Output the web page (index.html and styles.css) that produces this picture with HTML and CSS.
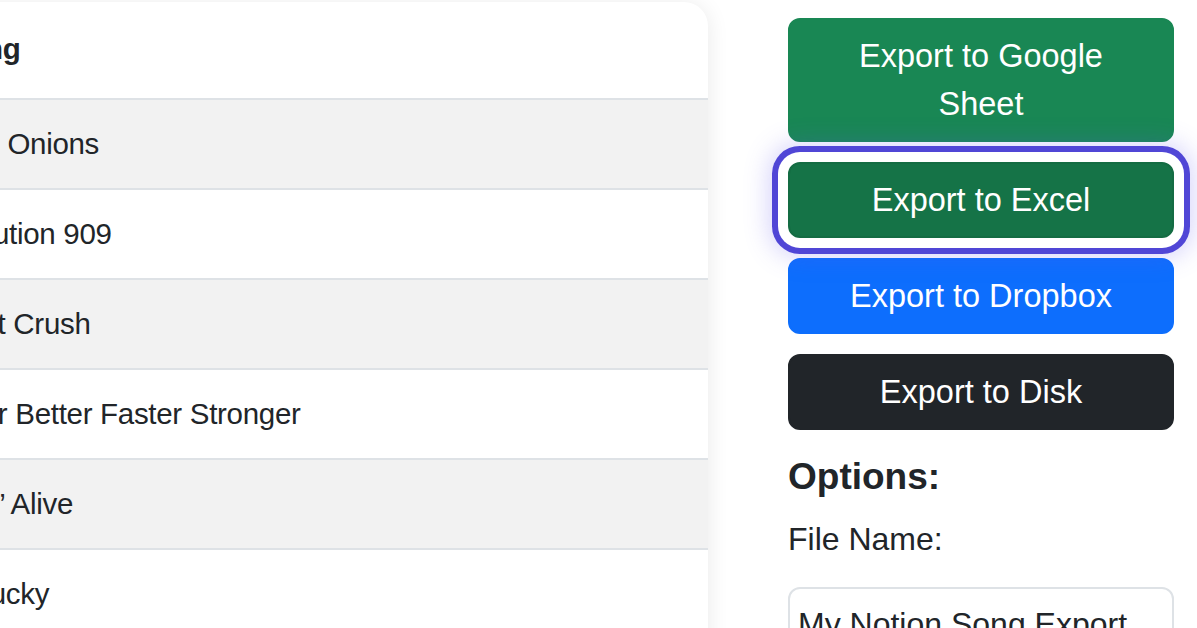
FILE: index.html
```html
<!DOCTYPE html>
<html lang="en">
<head>
<meta charset="utf-8">
<title>Notion Song Export</title>
<link rel="stylesheet" href="styles.css">
</head>
<body>
<div class="layout">
  <div class="card">
    <table class="songs">
      <thead>
        <tr><th>Song</th></tr>
      </thead>
      <tbody>
        <tr><td>Green Onions</td></tr>
        <tr><td>Revolution 909</td></tr>
        <tr><td>Instant Crush</td></tr>
        <tr><td>Harder Better Faster Stronger</td></tr>
        <tr><td>Stayin’ Alive</td></tr>
        <tr><td>Get Lucky</td></tr>
        <tr><td>One More Time</td></tr>
      </tbody>
    </table>
  </div>
  <aside class="panel">
    <div class="actions">
      <button class="btn btn-google">Export to Google Sheet</button>
      <button class="btn btn-excel">Export to Excel</button>
      <button class="btn btn-dropbox">Export to Dropbox</button>
      <button class="btn btn-disk">Export to Disk</button>
    </div>
    <h5 class="options-title">Options:</h5>
    <label class="field-label" for="fname">File Name:</label>
    <input id="fname" class="field-input" type="text" value="My Notion Song Export">
  </aside>
</div>
</body>
</html>
```

FILE: styles.css
```css
html, body {
  margin: 0;
  padding: 0;
  overflow: hidden;
  background: #ffffff;
}

body {
  font-family: "Liberation Sans", Arial, Helvetica, sans-serif;
  color: #212529;
}

.layout {
  display: flex;
  align-items: flex-start;
  gap: 80px;
}

.card {
  margin-left: -97px;
  margin-top: 2px;
  width: 805px;
  flex: none;
  background: #ffffff;
  border-radius: 24px;
  overflow: hidden;
  box-shadow: 0 2px 22px rgba(0, 0, 0, 0.09);
}

.songs {
  width: 100%;
  border-collapse: collapse;
  font-size: 29.5px;
  letter-spacing: -0.3px;
  line-height: 48px;
}

.songs th {
  text-align: left;
  font-weight: 700;
  padding: 23px 16px 25px 45px;
  border-bottom: 2px solid #dee2e6;
}

.songs td {
  padding: 20px 16px;
  border-bottom: 2px solid #dee2e6;
}

.songs tbody tr:nth-child(odd) td {
  background: #f2f2f2;
}

.panel {
  width: 386px;
  flex: none;
  padding-top: 18px;
  display: flex;
  flex-direction: column;
}

.actions {
  display: flex;
  flex-direction: column;
  gap: 20px;
}

.btn {
  display: block;
  width: 100%;
  font-family: "Liberation Sans", Arial, Helvetica, sans-serif;
  font-size: 32.5px;
  line-height: 48px;
  padding: 12px 24px;
  border: 2px solid transparent;
  border-radius: 12px;
  color: #ffffff;
  text-align: center;
  cursor: pointer;
}

.btn-google {
  background: #198754;
  border-color: #198754;
  padding-left: 60px;
  padding-right: 60px;
}

.btn-excel {
  background: #157347;
  border-color: #146c43;
  position: relative;
  z-index: 1;
  box-shadow:
    0 0 0 10px #ffffff,
    0 0 0 16px #5046d6,
    0 0 26px 18px rgba(96, 86, 236, 0.28);
}

.btn-dropbox {
  background: #0d6efd;
  border-color: #0d6efd;
}

.btn-disk {
  background: #212529;
  border-color: #212529;
}

.options-title {
  margin: 23px 0 0;
  font-size: 37px;
  line-height: 48px;
  font-weight: 700;
}

.field-label {
  margin-top: 14px;
  font-size: 32px;
  line-height: 48px;
}

.field-input {
  margin-top: 24px;
  box-sizing: border-box;
  width: 100%;
  font-family: "Liberation Sans", Arial, Helvetica, sans-serif;
  font-size: 32px;
  line-height: 48px;
  padding: 11px 8px;
  color: #212529;
  border: 2px solid #dee2e6;
  border-radius: 12px;
  background: #ffffff;
}
```
